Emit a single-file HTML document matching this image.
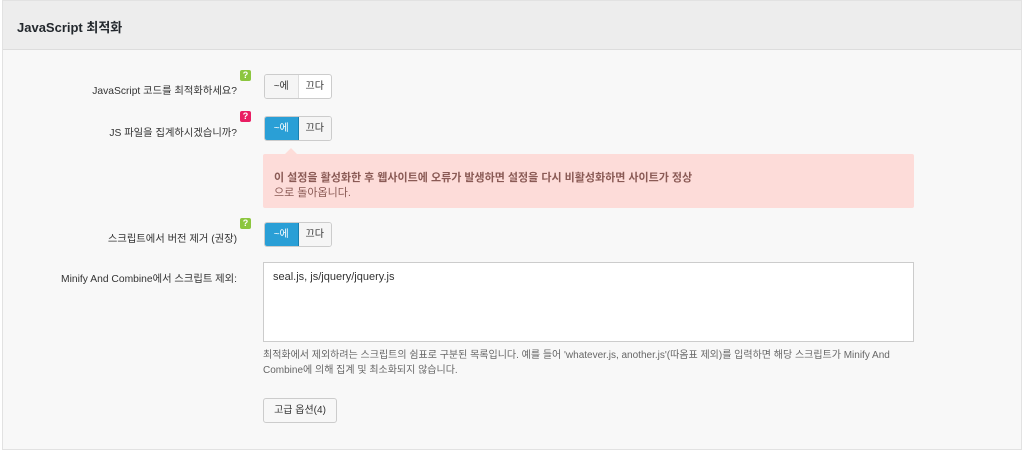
<!DOCTYPE html><html><head><meta charset="utf-8"><style>
body{margin:0;width:1024px;height:452px;background:#fff;font-family:"Liberation Sans","Noto Sans CJK KR",sans-serif;font-size:11px;color:#444;overflow:hidden;position:relative}
.box{position:absolute;left:2px;top:0;width:1020px;height:450px;border:1px solid #e2e2e2;background:#f8f8f8;box-sizing:border-box}
.hd{position:absolute;left:0;top:0;right:0;height:48px;background:#ededed;border-bottom:1px solid #ddd}
.hd span{position:absolute;left:14px;top:16px;font-size:13px;font-weight:bold;color:#23282d}
.lbl{position:absolute;right:787px;font-size:10.3px;color:#333;white-space:nowrap}
.q{position:absolute;width:11px;height:11px;border-radius:2px;color:#fff;font-size:9px;font-weight:bold;text-align:center;line-height:11px}
.tg{position:absolute;left:264px;width:68px;height:25px;border:1px solid #ccc;border-radius:3px;box-sizing:border-box;display:flex;background:#fff;overflow:hidden}
.tg div{flex:1;text-align:center;line-height:23px;font-size:10px;color:#333}
.tg .on{background:#2a9fd6;color:#fff;border-right:1px solid #1a80b0}
.tg .off{background:#f5f5f5;border-right:1px solid #ddd}
</style></head><body><div class="box">
<div class="hd"><span>JavaScript 최적화</span></div>
</div>
<div class="lbl" style="top:82px">JavaScript 코드를 최적화하세요?</div>
<div class="q" style="left:240px;top:70px;background:#8cc63f">?</div>
<div class="tg" style="top:74px"><div class="off">~에</div><div>끄다</div></div>
<div class="lbl" style="top:124px">JS 파일을 집계하시겠습니까?</div>
<div class="q" style="left:240px;top:111px;background:#e91e63">?</div>
<div class="tg" style="top:116px"><div class="on">~에</div><div style="background:#f5f5f5">끄다</div></div>
<div style="position:absolute;left:285px;top:148px;width:0;height:0;border:6px solid transparent;border-bottom-color:#fdddd9;border-top:0"></div>
<div style="position:absolute;left:263px;top:154px;width:651px;height:54px;background:#fddcd9;border-radius:2px"></div>
<div style="position:absolute;left:274px;top:169px;font-size:11px;color:#8a5a55;font-weight:bold">이 설정을 활성화한 후 웹사이트에 오류가 발생하면 설정을 다시 비활성화하면 사이트가 정상</div>
<div style="position:absolute;left:274px;top:184px;font-size:11px;color:#8a5a55">으로 돌아옵니다.</div>
<div class="lbl" style="top:230px">스크립트에서 버전 제거 (권장)</div>
<div class="q" style="left:240px;top:218px;background:#8cc63f">?</div>
<div class="tg" style="top:222px"><div class="on">~에</div><div style="background:#f5f5f5">끄다</div></div>
<div class="lbl" style="top:270px">Minify And Combine에서 스크립트 제외:</div>
<div style="position:absolute;left:263px;top:262px;width:651px;height:80px;border:1px solid #ccc;background:#fff;box-sizing:border-box;padding:8px 9px;font-size:11px;color:#333">seal.js, js/jquery/jquery.js</div>
<div style="position:absolute;left:263px;top:348px;width:648px;font-size:10px;line-height:15px;color:#666">최적화에서 제외하려는 스크립트의 쉼표로 구분된 목록입니다. 예를 들어 'whatever.js, another.js'(따옴표 제외)를 입력하면 해당 스크립트가 Minify And Combine에 의해 집계 및 최소화되지 않습니다.</div>
<div style="position:absolute;left:263px;top:398px;width:74px;height:25px;border:1px solid #ccc;border-radius:3px;background:#f7f7f7;box-sizing:border-box;text-align:center;line-height:23px;font-size:10px;color:#333">고급 옵션(4)</div>
</body></html>
